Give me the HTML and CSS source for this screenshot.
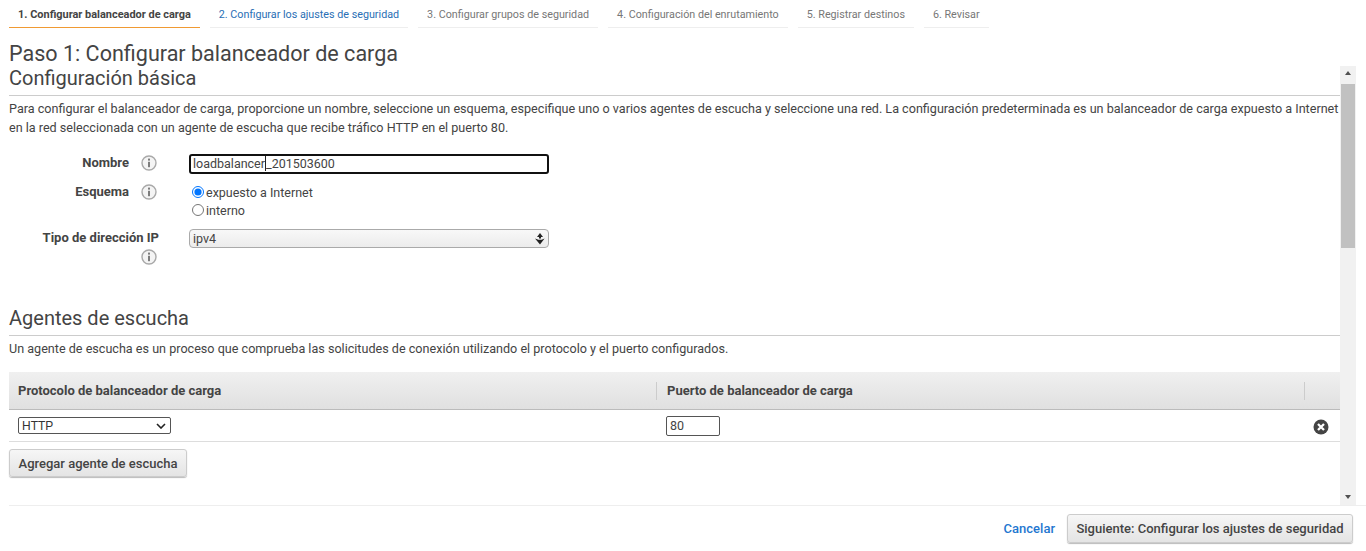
FILE: index.html
```html
<!DOCTYPE html>
<html lang="es">
<head>
    <meta charset="UTF-8">
    <meta name="viewport" content="width=device-width, initial-scale=1.0">
    <title>Paso 1: Configurar balanceador de carga</title>
    <link rel="stylesheet" href="styles.css">
</head>
<body>
    <div class="wizard-tabs">
        <a class="tab tab-active">1. Configurar balanceador de carga</a>
        <a class="tab tab-link">2. Configurar los ajustes de seguridad</a>
        <a class="tab">3. Configurar grupos de seguridad</a>
        <a class="tab">4. Configuración del enrutamiento</a>
        <a class="tab">5. Registrar destinos</a>
        <a class="tab">6. Revisar</a>
    </div>
    <h1 class="step-title">Paso 1: Configurar balanceador de carga</h1>
    <div class="scroll-wrap">
        <div class="scroll-content">
            <h2 class="section-title first">Configuración básica</h2>
            <p class="section-text">Para configurar el balanceador de carga, proporcione un nombre, seleccione un esquema, especifique uno o varios agentes de escucha y seleccione una red. La configuración predeterminada es un balanceador de carga expuesto a Internet en la red seleccionada con un agente de escucha que recibe tráfico HTTP en el puerto 80.</p>

            <div class="form-grid">
                <div class="form-label">
                    <span>Nombre</span>
                    <svg class="info" viewBox="0 0 16 16"><circle cx="8" cy="8" r="7" fill="#f4f4f4" stroke="#a9a9a9" stroke-width="1.4"/><rect x="7" y="6.8" width="2" height="5.4" fill="#7d7d7d"/><rect x="7" y="3.6" width="2" height="2" fill="#7d7d7d"/></svg>
                </div>
                <div class="name-input">loadbalancer<span class="caret"></span>_201503600</div>

                <div class="form-label">
                    <span>Esquema</span>
                    <svg class="info" viewBox="0 0 16 16"><circle cx="8" cy="8" r="7" fill="#f4f4f4" stroke="#a9a9a9" stroke-width="1.4"/><rect x="7" y="6.8" width="2" height="5.4" fill="#7d7d7d"/><rect x="7" y="3.6" width="2" height="2" fill="#7d7d7d"/></svg>
                </div>
                <div class="radio-group">
                    <label class="radio-row"><input type="radio" name="scheme" checked>expuesto a Internet</label>
                    <label class="radio-row"><input type="radio" name="scheme">interno</label>
                </div>

                <div class="form-label form-label-wrap">
                    <span>Tipo de dirección IP</span>
                    <svg class="info" viewBox="0 0 16 16"><circle cx="8" cy="8" r="7" fill="#f4f4f4" stroke="#a9a9a9" stroke-width="1.4"/><rect x="7" y="6.8" width="2" height="5.4" fill="#7d7d7d"/><rect x="7" y="3.6" width="2" height="2" fill="#7d7d7d"/></svg>
                </div>
                <div class="fake-select">
                    <span>ipv4</span>
                    <svg class="updown" viewBox="0 0 10 12"><path d="M5 0 8 4H6V5.4H4V4H2Z" fill="#222"/><path d="M0 5.4 5 11.5 9.6 5.6 6.6 6.8H3.4Z" fill="#222"/></svg>
                </div>
            </div>

            <h2 class="section-title second">Agentes de escucha</h2>
            <p class="section-text section-text-short">Un agente de escucha es un proceso que comprueba las solicitudes de conexión utilizando el protocolo y el puerto configurados.</p>

            <div class="listener-table">
                <div class="table-head">
                    <div class="col-protocol">Protocolo de balanceador de carga</div>
                    <div class="col-port">Puerto de balanceador de carga</div>
                    <div class="col-remove"></div>
                </div>
                <div class="table-row">
                    <div class="col-protocol">
                        <div class="small-select">
                            <span>HTTP</span>
                            <svg class="chevron" viewBox="0 0 10 6"><path d="M1 1 5 5 9 1" fill="none" stroke="#222" stroke-width="1.6"/></svg>
                        </div>
                    </div>
                    <div class="col-port"><div class="port-input">80</div></div>
                    <div class="col-remove">
                        <svg class="remove" viewBox="0 0 16 16"><circle cx="8" cy="8" r="7.5" fill="#444"/><path d="M5 5 11 11M11 5 5 11" stroke="#fff" stroke-width="2.3"/></svg>
                    </div>
                </div>
            </div>
            <button class="btn add-btn">Agregar agente de escucha</button>
        </div>
        <div class="scrollbar">
            <div class="arrow arrow-up"></div>
            <div class="thumb"></div>
            <div class="arrow arrow-down"></div>
        </div>
    </div>
    <div class="footer">
        <a class="cancel">Cancelar</a>
        <button class="btn next-btn">Siguiente: Configurar los ajustes de seguridad</button>
    </div>
</body>
</html>
```

FILE: styles.css
```css
*{
    box-sizing: border-box;
}
html,body{
    height: 100%;
}
body{
    margin: 0;
    height: 100vh;
    overflow: hidden;
    display: flex;
    flex-direction: column;
    background: #fff;
    color: #444;
    font-family: Roboto, "Liberation Sans", sans-serif;
    font-size: 12px;
}

.wizard-tabs{
    display: flex;
    gap: 10px;
    height: 28px;
    padding-left: 9px;
    flex: none;
}
.tab{
    padding: 8px 9px 0;
    height: 28px;
    font-size: 10.75px;
    line-height: 13px;
    color: #777;
    border-bottom: 1px solid #eee;
    white-space: nowrap;
}
.tab-active{
    color: #444;
    font-size: 10.95px;
    font-weight: 700;
    border-bottom: 1px solid #f09a33;
}
.tab-link{
    color: #2a6fb5;
}

.step-title{
    flex: none;
    margin: 13px 0 0 9px;
    height: 25px;
    font-size: 21.55px;
    line-height: 26px;
    font-weight: 400;
    color: #444;
}

.scroll-wrap{
    flex: 1;
    min-height: 0;
    display: flex;
    margin-right: 10px;
}
.scroll-content{
    flex: 1;
    min-width: 0;
    padding-left: 9px;
    overflow: hidden;
}
.scrollbar{
    flex: none;
    width: 16px;
    background: #f1f1f1;
    display: flex;
    flex-direction: column;
    align-items: center;
}
.thumb{
    width: 14px;
    height: 164px;
    background: #c1c1c1;
    margin-bottom: auto;
}
.arrow{
    width: 0;
    height: 0;
    border-left: 3.5px solid transparent;
    border-right: 3.5px solid transparent;
    flex: none;
}
.arrow-up{
    border-bottom: 4px solid #505050;
    margin: 5px 0 9px;
}
.arrow-down{
    border-top: 4px solid #505050;
    margin: 0 0 6px;
}

.section-title{
    margin: 0;
    font-size: 20px;
    font-weight: 400;
    line-height: 24px;
    color: #444;
    border-bottom: 1px solid #ccc;
}
.section-title.first{
    padding-bottom: 5px;
}
.section-title.second{
    margin-top: 41px;
    padding-bottom: 5px;
}
.section-text{
    margin: 3px 0 0;
    font-size: 12.6px;
    line-height: 19px;
    color: #444;
}

.form-grid{
    display: grid;
    grid-template-columns: 150px 360px;
    column-gap: 30px;
    margin-top: 17px;
}
.form-label{
    display: flex;
    justify-content: flex-end;
    align-items: flex-start;
    gap: 12px;
    padding: 1px 2px 0 0;
    font-size: 13px;
    font-weight: 700;
    line-height: 16px;
    color: #444;
}
.form-label-wrap{
    flex-direction: column;
    justify-content: flex-start;
    align-items: flex-end;
    gap: 3px;
    padding-right: 0;
}
.form-label-wrap .info{
    margin-right: 2px;
}
.info{
    width: 16px;
    height: 16px;
    flex: none;
}
.name-input{
    height: 20px;
    border: 2px solid #111;
    border-radius: 3px;
    padding-left: 2px;
    line-height: 16px;
    font-size: 12.5px;
    margin-bottom: 9px;
    color: #444;
}
.caret{
    display: inline-block;
    width: 1px;
    height: 15px;
    background: #222;
    vertical-align: -3px;
}
.radio-group{
    display: flex;
    flex-direction: column;
    margin-bottom: 10px;
}
.radio-row{
    display: flex;
    align-items: center;
    height: 18px;
    gap: 2px;
    padding-left: 3px;
    font-size: 12.5px;
    color: #444;
}
.radio-row input{
    margin: 0;
    width: 12px;
    height: 12px;
}
.fake-select{
    height: 19px;
    display: flex;
    align-items: center;
    justify-content: space-between;
    padding: 0 3px 0 3px;
    border: 1px solid #aaa;
    border-radius: 4px;
    background: linear-gradient(#f8f8f8, #ececec);
    font-size: 12.5px;
    color: #444;
}
.updown{
    width: 10px;
    height: 12px;
}

.listener-table{
    margin-top: 14px;
}
.table-head{
    display: flex;
    height: 38px;
    align-items: center;
    background: linear-gradient(#f0f0f0, #e0e0e0);
    border-bottom: 1px solid #bbb;
    font-size: 13px;
    font-weight: 700;
    color: #444;
}
.table-row{
    display: flex;
    height: 32px;
    align-items: center;
    border-bottom: 1px solid #ddd;
}
.col-protocol{
    width: 647px;
    padding-left: 9px;
}
.col-port{
    width: 648px;
    height: 18px;
    display: flex;
    align-items: center;
    padding-left: 10px;
}
.table-head .col-port{
    border-left: 1px solid #ccc;
}
.col-remove{
    flex: 1;
    height: 18px;
    display: flex;
    align-items: center;
    justify-content: center;
    padding-right: 2px;
}
.table-head .col-remove{
    border-left: 1px solid #ccc;
}
.small-select{
    width: 153px;
    height: 17px;
    display: flex;
    align-items: center;
    justify-content: space-between;
    padding: 0 4px 0 3px;
    border: 1px solid #555;
    border-radius: 2px;
    font-family: "Liberation Sans", sans-serif;
    font-size: 12px;
    color: #333;
}
.chevron{
    width: 10px;
    height: 6px;
}
.port-input{
    width: 54px;
    height: 20px;
    border: 1px solid #555;
    border-radius: 2px;
    padding-left: 3px;
    line-height: 18px;
    font-size: 12.5px;
}
.remove{
    width: 16px;
    height: 16px;
    margin-top: 3px;
}

.btn{
    font-family: Roboto, "Liberation Sans", sans-serif;
    font-size: 13px;
    font-weight: 500;
    color: #444;
    background: linear-gradient(#f6f6f6, #e4e4e4);
    border: 1px solid #ccc;
    border-radius: 3px;
    box-shadow: 0 1px 1px #bbb;
}
.add-btn{
    display: block;
    margin-top: 7px;
    width: 178px;
    height: 28px;
    padding: 0;
}

.footer{
    flex: none;
    height: 46px;
    margin-left: 9px;
    border-top: 1px solid #eee;
    display: flex;
    justify-content: flex-end;
    align-items: center;
    gap: 12px;
    padding: 0 13px 0 0;
}
.cancel{
    color: #1f77d0;
    font-weight: 500;
    font-size: 13px;
}
.next-btn{
    width: 286px;
    height: 29px;
    padding: 0;
}
```
